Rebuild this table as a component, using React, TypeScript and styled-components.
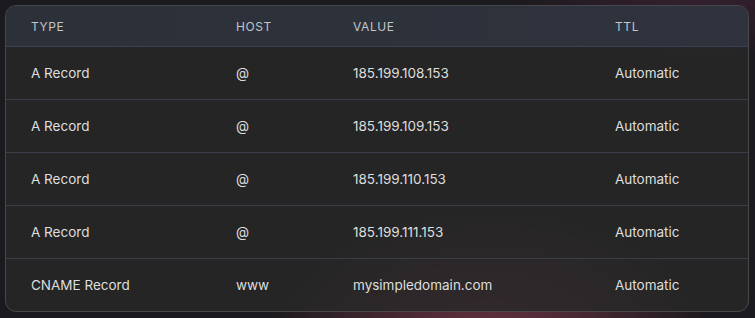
import React from "react";
import styled, { createGlobalStyle } from "styled-components";

const Global = createGlobalStyle`
  html, body { margin: 0; padding: 0; }
  body {
    width: 755px;
    height: 318px;
    overflow: hidden;
    background:
      radial-gradient(ellipse 320px 200px at 490px 345px, rgba(135, 60, 80, 0.75), transparent 70%),
      radial-gradient(ellipse 280px 120px at 700px -20px, rgba(90, 40, 70, 0.5), transparent 70%),
      #1b1a1e;
    font-family: Inter, "Noto Sans", sans-serif;
  }
`;

const Card = styled.div`
  margin: 5px 0 0 5px;
  width: 744px;
  box-sizing: border-box;
  border: 1px solid #48484c;
  border-radius: 11px;
  background: rgba(40, 40, 40, 0.82);
  overflow: hidden;
`;

const Grid = styled.div<{ $head?: boolean; $first?: boolean }>`
  display: grid;
  grid-template-columns: 205px 117px 262px 1fr;
  align-items: center;
  padding-left: 25px;
  height: ${(p) => (p.$head ? "40px" : "52px")};
  ${(p) =>
    p.$head
      ? "background: linear-gradient(90deg, #2b3039, #2f333d);"
      : p.$first
      ? ""
      : "border-top: 1px solid #383d47;"}
`;

const HeadCell = styled.div`
  font-size: 12px;
  letter-spacing: 0.05em;
  text-transform: uppercase;
  color: #c2c6cd;
  font-weight: 400;
`;

const Cell = styled.div`
  font-size: 13.5px;
  color: #dedede;
  font-weight: 400;
`;

const HeadDivider = styled.div`
  height: 1px;
  background: #3a4252;
`;

const rows = [
  ["A Record", "@", "185.199.108.153", "Automatic"],
  ["A Record", "@", "185.199.109.153", "Automatic"],
  ["A Record", "@", "185.199.110.153", "Automatic"],
  ["A Record", "@", "185.199.111.153", "Automatic"],
  ["CNAME Record", "www", "mysimpledomain.com", "Automatic"],
];

export default function App() {
  return (
    <>
      <Global />
      <Card>
        <Grid $head>
          <HeadCell>Type</HeadCell>
          <HeadCell>Host</HeadCell>
          <HeadCell>Value</HeadCell>
          <HeadCell>TTL</HeadCell>
        </Grid>
        <HeadDivider />
        {rows.map((r, i) => (
          <Grid key={i} $first={i === 0}>
            {r.map((c, j) => (
              <Cell key={j}>{c}</Cell>
            ))}
          </Grid>
        ))}
      </Card>
    </>
  );
}
